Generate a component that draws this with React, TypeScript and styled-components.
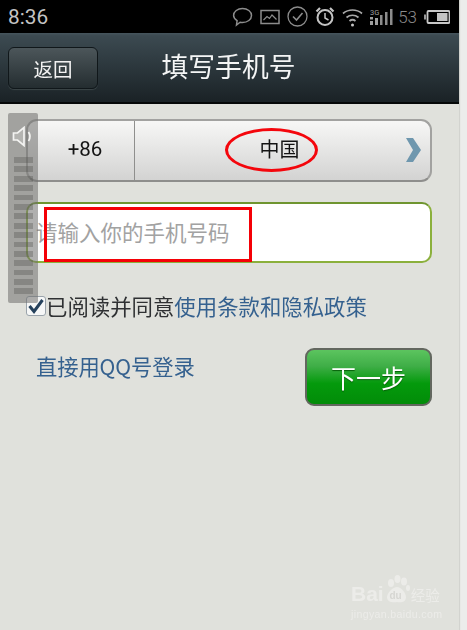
import React from 'react';
import styled, { createGlobalStyle } from 'styled-components';

const cjk = '"Noto Sans CJK SC", "Noto Sans", sans-serif';

const GlobalStyle = createGlobalStyle`
    html, body {
        margin: 0;
        padding: 0;
        height: 630px;
        overflow: hidden;
        background: #ecedeb;
    }
`;

const StyledPage = styled.div`
    display: flex;
    width: 467px;
    height: 630px;
    filter: blur(0.35px);
`;

const StyledPhone = styled.div`
    position: relative;
    display: flex;
    flex-direction: column;
    width: 459px;
    height: 630px;
    background: #e0e1dc;
    box-shadow: 1px 0 1px #d2d3cf;
    font-family: ${cjk};
`;

const StyledStatusBar = styled.div`
    display: flex;
    align-items: center;
    justify-content: space-between;
    flex: 0 0 33px;
    padding: 0 9px 0 8px;
    background: #000;
    color: #b4b4b4;
`;

const StyledClock = styled.span`
    font-family: Roboto, sans-serif;
    font-size: 20.8px;
    color: #c4c4c4;
`;

const StyledStatusIcons = styled.div`
    display: flex;
    align-items: center;
    gap: 7px;
`;

const StyledBattery = styled.span`
    font-family: Roboto, sans-serif;
    font-size: 17px;
    font-weight: 300;
    color: #8a8a8a;
    margin-left: -3px;
`;

const StyledNavBar = styled.div`
    display: grid;
    grid-template-columns: 1fr auto 1fr;
    align-items: center;
    flex: 0 0 71px;
    box-sizing: border-box;
    padding: 0 8px 3px;
    background: linear-gradient(#46555d 0, #3c4a51 4%, #1b2327 97%);
    border-bottom: 2px solid #050808;
`;

const StyledBackButton = styled.div`
    display: flex;
    align-items: center;
    justify-content: center;
    justify-self: start;
    box-sizing: border-box;
    width: 90px;
    height: 42px;
    margin-top: 4px;
    padding-top: 1px;
    border: 1px solid #10171a;
    border-radius: 6px;
    background: linear-gradient(#4c565a, #242d30);
    box-shadow: 0 1px 1px #3c4649;
    color: #f2f2f2;
    font-size: 19.5px;
`;

const StyledTitle = styled.div`
    margin-left: -2px;
    color: #f4f5f5;
    font-size: 26.8px;
    line-height: 36px;
`;

const StyledBody = styled.div`
    display: flex;
    flex-direction: column;
    padding: 15px 27px 0 26px;
`;

const StyledCountryRow = styled.div`
    display: flex;
    box-sizing: border-box;
    height: 63px;
    border: 2px solid #a2a2a0;
    border-bottom-color: #8e8e8c;
    border-radius: 11px;
    background: linear-gradient(#f7f7f6, #d3d3d2);
    color: #141414;
`;

const StyledDialCode = styled.div`
    display: flex;
    align-items: center;
    justify-content: center;
    width: 107px;
    padding: 0 0 3px 8px;
    box-sizing: border-box;
    border-right: 1px solid #8f8f8d;
    font-family: Roboto, sans-serif;
    font-size: 20.5px;
`;

const StyledCountry = styled.div`
    position: relative;
    display: flex;
    flex: 1;
    align-items: center;
    justify-content: center;
    padding: 0 6px 5px 0;
    font-size: 20px;
`;

const StyledChevron = styled.svg`
    position: absolute;
    right: 7px;
    top: 17px;
`;

const StyledEllipse = styled.div`
    position: absolute;
    left: 90px;
    top: 7px;
    box-sizing: border-box;
    width: 93px;
    height: 44px;
    border: 3px solid #f4060c;
    border-radius: 50%;
`;

const StyledPhoneInput = styled.div`
    position: relative;
    display: flex;
    align-items: center;
    box-sizing: border-box;
    height: 61px;
    margin-top: 20px;
    padding: 0 0 3px 8px;
    border: 2px solid #8bb03c;
    border-top-color: #6f9530;
    border-radius: 10px;
    background: #fff;
    color: #a2a2a2;
    font-size: 21.5px;
`;

const StyledRedBox = styled.div`
    position: absolute;
    left: 16px;
    top: 3px;
    box-sizing: border-box;
    width: 208px;
    height: 55px;
    border: 3px solid #f40006;
`;

const StyledTerms = styled.div`
    display: flex;
    align-items: center;
    height: 32px;
    margin-top: 26px;
    font-size: 21.4px;
    color: #2f3133;
    white-space: nowrap;
`;

const StyledCheckbox = styled.div`
    display: flex;
    flex: 0 0 auto;
    align-items: center;
    justify-content: center;
    box-sizing: border-box;
    width: 20px;
    height: 20px;
    margin-top: 2px;
    border: 1px solid #9aa3ab;
    border-radius: 3px;
    background: #f6f7f7;
`;

const StyledLink = styled.span`
    color: #35618f;
`;

const StyledActions = styled.div`
    display: flex;
    align-items: flex-start;
    justify-content: space-between;
    margin-top: 27px;
    padding-left: 10px;
`;

const StyledQQLink = styled(StyledLink)`
    font-size: 21.3px;
    line-height: 36px;
    letter-spacing: -0.1px;
`;

const StyledNextButton = styled.div`
    display: flex;
    align-items: center;
    justify-content: center;
    box-sizing: border-box;
    width: 127px;
    height: 58px;
    border: 2px solid #63675f;
    border-radius: 9px;
    background: linear-gradient(#5cc45f 0, #3fae47 30%, #049a0c 62%, #028c08 100%);
    color: #fff;
    font-size: 25px;
    text-shadow: 0 1px 1px #055f08;
`;

const StyledVolumeOverlay = styled.div`
    position: absolute;
    left: 8px;
    top: 113px;
    display: flex;
    flex-direction: column;
    align-items: center;
    box-sizing: border-box;
    width: 30px;
    height: 190px;
    padding-top: 13px;
    border-radius: 2px;
    background: rgba(112, 112, 110, 0.55);
`;

const StyledVolumeBars = styled.div`
    display: flex;
    flex-direction: column;
    gap: 3.6px;
    margin-top: 10px;
`;

const StyledVolumeBar = styled.div`
    width: 19px;
    height: 5.8px;
    background: rgba(82, 82, 80, 0.36);
`;

const StyledWatermark = styled.div`
    position: absolute;
    left: 351px;
    top: 574px;
    display: flex;
    flex-direction: column;
    color: #ecece9;
`;

const StyledBrandRow = styled.div`
    display: flex;
    align-items: flex-end;
    height: 32px;
`;

const StyledBrandLatin = styled.span`
    font-family: "Liberation Sans", sans-serif;
    font-size: 21px;
    font-weight: 700;
    line-height: 24px;
`;

const StyledBrandCjk = styled.span`
    font-size: 14.5px;
    line-height: 22px;
    margin-left: 1px;
`;

const StyledBrandUrl = styled.span`
    font-family: "Liberation Sans", sans-serif;
    font-size: 10.6px;
    letter-spacing: 0.35px;
    margin-top: 2px;
`;

function StatusIcons(): JSX.Element {
    return (
        <StyledStatusIcons>
            <svg width="21" height="24" viewBox="0 0 21 24" fill="none" stroke="#8c8c8c" strokeWidth="1.5">
                <path d="M10.5 3.5c5 0 9 3 9 7s-4 7-9 7c-.8 0-1.6-.1-2.4-.3L4.5 20l.6-4.4C3 14.300 1.600 12.500 1.600 10.500c0-4 4-7 8.900-7z" />
            </svg>
            <svg width="20" height="16" viewBox="0 0 20 16" fill="none" stroke="#8c8c8c" strokeWidth="1.500">
                <rect x="1" y="1.500" width="18" height="13" />
                <path d="M3.500 11l3.500-3.500 2.500 2 2.500-3.500 4.500 4.500" strokeWidth="1.200" />
            </svg>
            <svg width="21" height="21" viewBox="0 0 21 21" fill="none" stroke="#8c8c8c" strokeWidth="1.300">
                <circle cx="10.500" cy="10.500" r="9.500" />
                <path d="M6 10.500l3.500 3.500 6-7" strokeWidth="1.600" />
            </svg>
            <svg width="20" height="21" viewBox="0 0 20 21" fill="none" stroke="#c4c4c4" strokeWidth="2">
                <circle cx="10" cy="11.500" r="7.500" />
                <path d="M10 7v5l3.500 2" strokeWidth="1.500" />
                <path d="M1.500 5.500L5 2M18.500 5.500L15 2" strokeWidth="2.200" />
            </svg>
            <svg width="21" height="20" viewBox="0 0 21 20" fill="none" stroke="#a8a8a8" strokeWidth="1.700">
                <path d="M1 6.500c5.500-4.700 13.500-4.700 19 0" />
                <path d="M4.500 10.500c3.500-3 8.500-3 12 0" />
                <path d="M7.500 14c1.800-1.500 4.200-1.500 6 0" />
                <circle cx="10.500" cy="18" r="1.500" fill="#c4c4c4" stroke="none" />
            </svg>
            <svg width="24" height="18" viewBox="0 0 24 18" fill="#a0a0a0">
                <text x="0" y="7" fontSize="7.500" fontFamily="Roboto, sans-serif">3G</text>
                <rect x="0" y="13" width="3" height="4" />
                <rect x="5" y="10" width="3" height="7" />
                <rect x="0" y="9" width="3" height="2.500" />
                <rect x="10" y="7" width="2.500" height="10" fill="#8c8c8c" />
                <rect x="15" y="4" width="2.500" height="13" fill="#8c8c8c" />
                <rect x="20" y="1" width="2.500" height="16" fill="#8c8c8c" />
            </svg>
            <StyledBattery>53</StyledBattery>
            <svg width="26" height="14" viewBox="0 0 26 14" fill="none">
                <rect x="0" y="4.500" width="2" height="5" fill="#9a9a9a" />
                <rect x="3.500" y="1" width="22" height="12" rx="1" stroke="#c8c8c8" strokeWidth="1.800" />
                <rect x="13" y="3" width="10.500" height="8" fill="#c4c4c4" />
            </svg>
        </StyledStatusIcons>
    );
}

function VolumeOverlay(): JSX.Element {
    return (
        <StyledVolumeOverlay>
            <svg width="22" height="21" viewBox="0 0 22 21" fill="none" stroke="#f4f4f2" strokeWidth="1.700">
                <path d="M1.500 7h4L12 1.500v18L5.500 14h-4z" fill="rgba(255,255,255,0.18)" />
                <path d="M16.500 6c1.800 2.700 1.800 6.300 0 9" strokeWidth="1.800" />
            </svg>
            <StyledVolumeBars>
                {Array.from({ length: 15 }, (_, i) => (
                    <StyledVolumeBar key={i} />
                ))}
            </StyledVolumeBars>
        </StyledVolumeOverlay>
    );
}

function Watermark(): JSX.Element {
    return (
        <StyledWatermark>
            <StyledBrandRow>
                <StyledBrandLatin>Bai</StyledBrandLatin>
                <svg width="26" height="32" viewBox="0 0 26 32" fill="#ecece9">
                    <ellipse cx="7" cy="9" rx="3" ry="4" />
                    <ellipse cx="13.500" cy="5" rx="3" ry="4" />
                    <ellipse cx="20" cy="7.500" rx="3" ry="4" />
                    <ellipse cx="24" cy="14" rx="2" ry="3" />
                    <path d="M13 13c4 0 9 6 9 10 0 5-5 6-9 5-4 1-10 0-10-5 0-4 6-10 10-10z" />
                    <text x="5.500" y="25" fontSize="10" fontWeight="700" fontFamily="Liberation Sans, sans-serif" fill="#d6d6d2">du</text>
                </svg>
                <StyledBrandCjk>经验</StyledBrandCjk>
            </StyledBrandRow>
            <StyledBrandUrl>jingyan.baidu.com</StyledBrandUrl>
        </StyledWatermark>
    );
}

export default function App(): JSX.Element {
    return (
        <StyledPage>
            <GlobalStyle />
            <StyledPhone>
                <StyledStatusBar>
                    <StyledClock>8:36</StyledClock>
                    <StatusIcons />
                </StyledStatusBar>
                <StyledNavBar>
                    <StyledBackButton>返回</StyledBackButton>
                    <StyledTitle>填写手机号</StyledTitle>
                </StyledNavBar>
                <StyledBody>
                    <StyledCountryRow>
                        <StyledDialCode>+86</StyledDialCode>
                        <StyledCountry>
                            中国
                            <StyledEllipse />
                            <StyledChevron width="19" height="24" viewBox="0 0 19 24">
                                <path d="M2 0h7l8 12-8 12H2l7-12z" fill="#6f97ae" />
                            </StyledChevron>
                        </StyledCountry>
                    </StyledCountryRow>
                    <StyledPhoneInput>
                        请输入你的手机号码
                        <StyledRedBox />
                    </StyledPhoneInput>
                    <StyledTerms>
                        <StyledCheckbox>
                            <svg width="16" height="15" viewBox="0 0 16 15" fill="none" stroke="#25415c" strokeWidth="3">
                                <path d="M1.500 7l4.500 5.500L14.500 1" />
                            </svg>
                        </StyledCheckbox>
                        已阅读并同意<StyledLink>使用条款和隐私政策</StyledLink>
                    </StyledTerms>
                    <StyledActions>
                        <StyledQQLink>直接用QQ号登录</StyledQQLink>
                        <StyledNextButton>下一步</StyledNextButton>
                    </StyledActions>
                </StyledBody>
                <VolumeOverlay />
                <Watermark />
            </StyledPhone>
        </StyledPage>
    );
}
